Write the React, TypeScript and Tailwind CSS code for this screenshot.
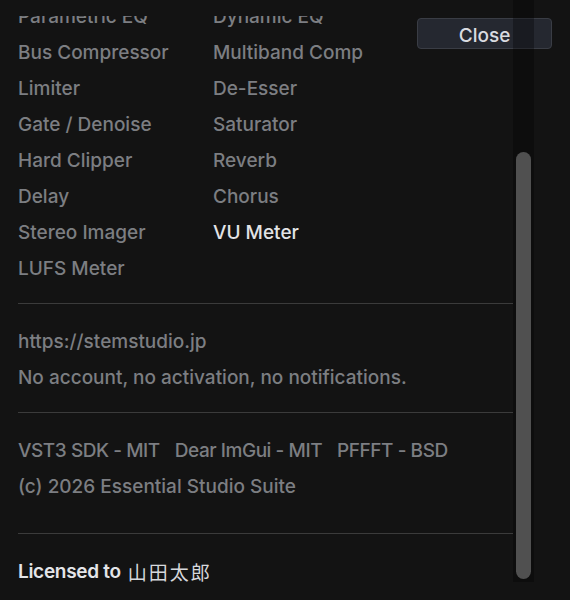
import React from 'react';

const plugins: [string, string][] = [
  ['Parametric EQ', 'Dynamic EQ'],
  ['Bus Compressor', 'Multiband Comp'],
  ['Limiter', 'De-Esser'],
  ['Gate / Denoise', 'Saturator'],
  ['Hard Clipper', 'Reverb'],
  ['Delay', 'Chorus'],
  ['Stereo Imager', 'VU Meter'],
  ['LUFS Meter', ''],
];

const current = 'VU Meter';

const Row: React.FC<{ children: React.ReactNode; className?: string }> = ({ children, className = '' }) => (
  <div className={`h-[36px] flex items-center whitespace-nowrap ${className}`}>{children}</div>
);

const Separator: React.FC = () => <div className="h-px bg-[#3b3b3b]" />;

const App: React.FC = () => {
  return (
    <div
      className="relative w-[570px] h-[600px] overflow-hidden bg-[#131313] text-[19px] font-medium text-[#7c7e82]"
      style={{ fontFamily: 'Inter, "Noto Sans CJK JP", sans-serif' }}
    >
      {/* scrolled about panel */}
      <div className="mt-[16px] h-[584px] overflow-hidden">
        <div className="mt-[-17px] w-[513px] pl-[18px]">
          <div className="grid grid-cols-[195px_1fr]">
            {plugins.map(([a, b], i) => (
              <React.Fragment key={i}>
                <Row className={a === current ? 'text-[#e2e3e6]' : ''}>{a}</Row>
                <Row className={b === current ? 'text-[#e2e3e6]' : ''}>{b}</Row>
              </React.Fragment>
            ))}
          </div>

          <div className="mt-[16px]">
            <Separator />
          </div>
          <div className="mt-[20px]">
            <Row>https://stemstudio.jp</Row>
            <Row>No account, no activation, no notifications.</Row>
          </div>

          <div className="mt-[16px]">
            <Separator />
          </div>
          <div className="mt-[20px]">
            <Row className="gap-[15px] tracking-[-0.45px]">
              <span>VST3 SDK - MIT</span>
              <span>Dear ImGui - MIT</span>
              <span>PFFFT - BSD</span>
            </Row>
            <Row>(c) 2026 Essential Studio Suite</Row>
          </div>

          <div className="mt-[28px]">
            <Separator />
          </div>
          <div className="mt-[20px]">
            <Row className="text-[#e4e5e9]">
              <span className="font-semibold tracking-[-0.3px]">Licensed to</span>
              <span
                className="ml-[7px] font-normal tracking-[2px] text-[#d6d8dc]"
                style={{ fontFamily: '"Noto Sans CJK JP", sans-serif' }}
              >
                山田太郎
              </span>
            </Row>
          </div>
        </div>
      </div>

      {/* close button */}
      <button className="absolute left-[417px] top-[18px] w-[135px] h-[31px] pt-[5px] rounded-[4px] border border-[#3a3d45] bg-[#252830] text-[19px] font-medium text-[#d9dbe0] flex items-center justify-center">
        Close
      </button>

      {/* vertical scrollbar */}
      <div className="absolute left-[513px] top-0 w-[21px] h-[582px] bg-black/30 flex justify-center">
        <div className="mt-[152px] w-[15px] h-[427px] rounded-full bg-[#505050]" />
      </div>
    </div>
  );
};

export default App;
